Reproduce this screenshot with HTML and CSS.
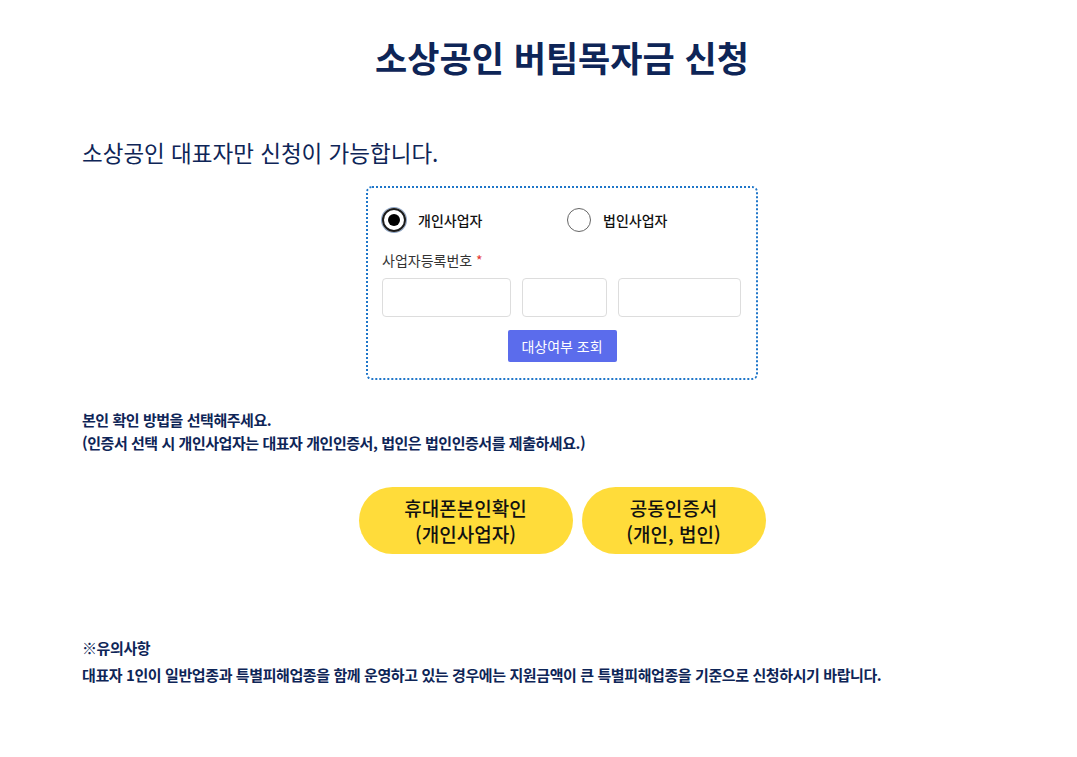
FILE: index.html
```html
<!DOCTYPE html>
<html lang="ko">
<head>
  <meta charset="UTF-8" />
  <meta name="viewport" content="width=device-width, initial-scale=1.0"/>
  <title>소상공인 버팀목자금 신청</title>
  <link rel="stylesheet" href="styles.css">
</head>
<body>
  <div class="wrap">
    <h1>소상공인 버팀목자금 신청</h1>

    <p class="lead">소상공인 대표자만 신청이 가능합니다.</p>

    <div class="check-box">
      <div class="radios">
        <label class="radio"><span class="dot on"></span>개인사업자</label>
        <label class="radio"><span class="dot"></span>법인사업자</label>
      </div>
      <div class="field-label">사업자등록번호 <span class="req">*</span></div>
      <div class="biz-inputs">
        <input type="text" class="in1">
        <input type="text" class="in2">
        <input type="text" class="in3">
      </div>
      <div class="btn-row">
        <button class="btn-check">대상여부 조회</button>
      </div>
    </div>

    <p class="guide">본인 확인 방법을 선택해주세요.<br>(인증서 선택 시 개인사업자는 대표자 개인인증서, 법인은 법인인증서를 제출하세요.)</p>

    <div class="auth-btns">
      <button class="auth phone">휴대폰본인확인<br>(개인사업자)</button>
      <button class="auth cert">공동인증서<br>(개인, 법인)</button>
    </div>

    <div class="notice">
      <p class="notice-title">※유의사항</p>
      <p>대표자 1인이 일반업종과 특별피해업종을 함께 운영하고 있는 경우에는 지원금액이 큰 특별피해업종을 기준으로 신청하시기 바랍니다.</p>
    </div>
  </div>
</body>
</html>
```

FILE: styles.css
```css
body {
  margin: 0;
  background: #fff;
  font-family: "Noto Sans CJK KR", "Noto Sans", sans-serif;
  color: #0e2557;
}
.wrap {
  width: 960px;
  margin-left: 82px;
  padding-top: 30px;
}
h1 {
  margin: 0;
  text-align: center;
  font-size: 35px;
  font-weight: 700;
  line-height: 54px;
}
.lead {
  margin: 52px 0 0;
  font-size: 22.5px;
  line-height: 32px;
}
.check-box {
  width: 360px;
  margin: 18px auto 0;
  padding: 20px 14px 16px;
  border: 2px dotted #1f76c9;
  border-radius: 6px;
  color: #222;
}
.radios {
  display: grid;
  grid-template-columns: 185px auto;
}
.radio {
  display: flex;
  align-items: center;
  gap: 12px;
  font-size: 14px;
  font-weight: 500;
  line-height: 24px;
  color: #111;
}
.dot {
  box-sizing: border-box;
  width: 24px;
  height: 24px;
  border: 1px solid #666;
  border-radius: 50%;
  position: relative;
}
.dot.on {
  border: 2px solid #1b1b1b;
  box-shadow: 0 0 0 1px #8da4c4;
}
.dot.on::after {
  content: "";
  position: absolute;
  left: 4px;
  top: 4px;
  width: 12px;
  height: 12px;
  border-radius: 50%;
  background: #000;
}
.field-label {
  margin-top: 18px;
  font-size: 14px;
  line-height: 20px;
  color: #333;
}
.req {
  color: #e53935;
}
.biz-inputs {
  display: flex;
  gap: 11px;
  margin-top: 8px;
}
.biz-inputs input {
  box-sizing: border-box;
  height: 39px;
  border: 1px solid #ddd;
  border-radius: 4px;
  padding: 0 8px;
}
.in1 { width: 129px; }
.in2 { width: 85px; }
.in3 { width: 123px; }
.btn-row {
  text-align: center;
  margin-top: 13px;
}
.btn-check {
  width: 109px;
  height: 32px;
  border: 0;
  border-radius: 2px;
  background: #5b6cec;
  color: #fff;
  font-family: inherit;
  font-size: 14px;
}
.guide {
  margin: 28px 0 0;
  font-size: 15px;
  line-height: 23px;
  font-weight: 700;
  letter-spacing: -0.45px;
}
.auth-btns {
  display: flex;
  justify-content: center;
  gap: 9px;
  margin-top: 33px;
}
.auth {
  height: 67px;
  border: 0;
  border-radius: 34px;
  background: #ffdc3a;
  color: #111;
  font-family: inherit;
  font-size: 19px;
  font-weight: 500;
  line-height: 26px;
}
.phone { width: 214px; }
.cert { width: 184px; }
.notice {
  margin-top: 80px;
  font-size: 15px;
  font-weight: 700;
  letter-spacing: -0.4px;
}
.notice p {
  margin: 0;
  line-height: 27px;
}
```
